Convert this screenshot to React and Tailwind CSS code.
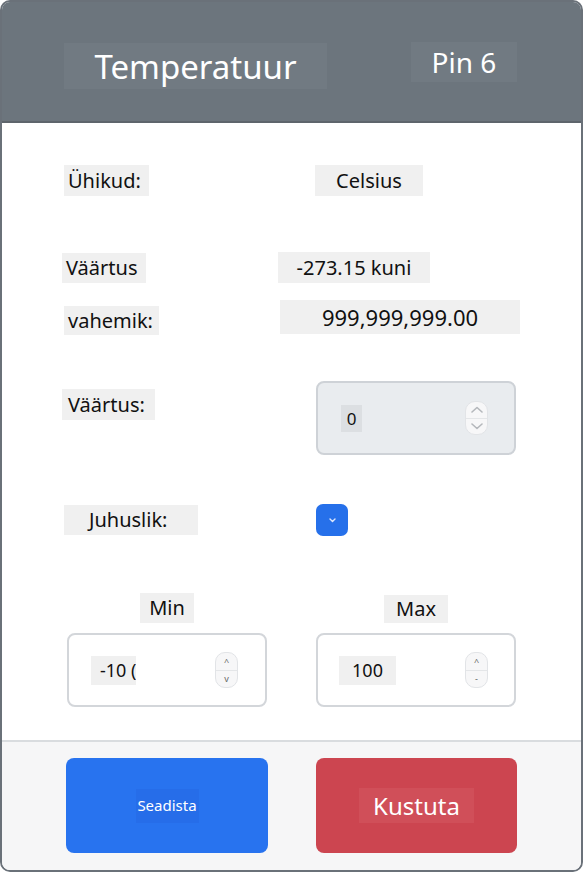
import React from 'react';

const font = { fontFamily: '"Noto Sans", "Open Sans", sans-serif' };

const Chip = ({ className = '', children }) => (
  <div className={`flex items-center bg-[#f0f0f0] text-[#111] whitespace-nowrap ${className}`}>{children}</div>
);

const Spinner = ({ className = '', small = false, minus = false }) => (
  <div className={`flex flex-col rounded-[10px] border border-[#e2e4e7] bg-[#f7f7f8] overflow-hidden ${className}`}>
    <div className="flex-1 flex items-center justify-center border-b border-[#e4e6e8]">
      {small ? (
        <span className="text-[9px] leading-none text-[#666]">^</span>
      ) : (
        <svg width="12" height="7" viewBox="0 0 12 7" fill="none">
          <path d="M1 6 L6 1.5 L11 6" stroke="#b5b8bc" strokeWidth="1.6" strokeLinecap="round" strokeLinejoin="round" />
        </svg>
      )}
    </div>
    <div className="flex-1 flex items-center justify-center">
      {small ? (
        <span className="text-[9px] leading-none text-[#666]">{minus ? '-' : 'v'}</span>
      ) : (
        <svg width="12" height="7" viewBox="0 0 12 7" fill="none">
          <path d="M1 1 L6 5.5 L11 1" stroke="#b5b8bc" strokeWidth="1.6" strokeLinecap="round" strokeLinejoin="round" />
        </svg>
      )}
    </div>
  </div>
);

export default function App() {
  return (
    <div className="w-[583px] h-[872px] bg-white" style={font}>
      <div className="w-[583px] h-[872px] rounded-[10px] border-2 border-[#6a7179] overflow-hidden flex flex-col">
        {/* header */}
        <div className="h-[121px] shrink-0 bg-[#6c757d] border-b-2 border-[#5e656c] flex items-start pt-[41px]">
          <div className="ml-[62px] w-[263px] h-[46px] flex items-center justify-center bg-white/[0.04] text-white text-[33px] leading-none">
            Temperatuur
          </div>
          <div className="ml-[84px] -mt-[1px] w-[106px] h-[40px] flex items-center justify-center bg-white/[0.04] text-white text-[28px] leading-none">
            Pin 6
          </div>
        </div>

        {/* body */}
        <div className="flex-1 flex flex-col text-[20px] leading-none">
          <div className="mt-[42px] h-[31px] flex items-start">
            <Chip className="ml-[62px] w-[85px] h-[31px] pl-[4px]">Ühikud:</Chip>
            <Chip className="ml-[166px] w-[108px] h-[31px] justify-center">Celsius</Chip>
          </div>

          <div className="mt-[56px] h-[31px] flex items-start">
            <Chip className="ml-[60px] mt-[1px] w-[84px] h-[30px] pl-[4px]">Väärtus</Chip>
            <Chip className="ml-[132px] w-[152px] h-[31px] justify-center">-273.15 kuni</Chip>
          </div>

          <div className="mt-[17px] h-[35px] flex items-start">
            <Chip className="ml-[62px] mt-[6px] w-[95px] h-[29px] pl-[4px]">vahemik:</Chip>
            <Chip className="ml-[121px] w-[240px] h-[34px] justify-center text-[22px]">999,999,999.00</Chip>
          </div>

          <div className="mt-[46px] h-[74px] flex items-start">
            <Chip className="ml-[60px] mt-[8px] w-[93px] h-[31px] pl-[6px]">Väärtus:</Chip>
            <div className="ml-[161px] w-[200px] h-[74px] rounded-[8px] border-2 border-[#ced2d7] bg-[#e9ecef] flex items-center pl-[23px] pr-[26px]">
              <div className="w-[21px] h-[27px] bg-[#dcdfe2] flex items-center justify-center text-[17px] text-[#111]">0</div>
              <Spinner className="ml-auto w-[23px] h-[34px]" />
            </div>
          </div>

          <div className="mt-[49px] h-[32px] flex items-start">
            <Chip className="ml-[62px] mt-[1px] w-[134px] h-[30px] pl-[25px]">Juhuslik:</Chip>
            <div className="ml-[118px] w-[32px] h-[32px] rounded-[7px] bg-[#2670ea] flex items-center justify-center">
              <svg width="7" height="5" viewBox="0 0 7 5" fill="none">
                <path d="M1 1 L3.5 3.5 L6 1" stroke="#dfe8fb" strokeWidth="1.4" strokeLinecap="round" strokeLinejoin="round" />
              </svg>
            </div>
          </div>

          <div className="mt-[57px] ml-[65px] grid grid-cols-[200px_200px] gap-x-[49px]">
            <div className="flex justify-center">
              <Chip className="w-[54px] h-[30px] justify-center">Min</Chip>
            </div>
            <div className="flex justify-center">
              <Chip className="mt-[2px] w-[64px] h-[28px] justify-center">Max</Chip>
            </div>
            <div className="mt-[10px] h-[74px] rounded-[8px] border-2 border-[#d3d6da] bg-white flex items-center pl-[22px] pr-[27px]">
              <Chip className="w-[45px] h-[29px] pl-[9px] overflow-hidden text-[18px]">-10 (</Chip>
              <Spinner small className="ml-auto w-[23px] h-[36px]" />
            </div>
            <div className="mt-[10px] h-[74px] rounded-[8px] border-2 border-[#d3d6da] bg-white flex items-center pl-[21px] pr-[26px]">
              <Chip className="w-[57px] h-[29px] justify-center text-[18px]">100</Chip>
              <Spinner small minus className="ml-auto w-[23px] h-[36px]" />
            </div>
          </div>
        </div>

        {/* footer */}
        <div className="h-[130px] shrink-0 bg-[#f6f6f7] border-t-2 border-[#d9dcdf] pt-[16px] pl-[64px] grid grid-cols-[202px_201px] gap-x-[48px] content-start">
          <button className="h-[95px] rounded-[8px] bg-[#2873ef] flex items-center justify-center">
            <span className="w-[63px] h-[34px] flex items-center justify-center bg-[#266de9] text-white text-[15px] leading-none">Seadista</span>
          </button>
          <button className="h-[95px] rounded-[8px] bg-[#cc4550] flex items-center justify-center">
            <span className="w-[115px] h-[35px] flex items-center justify-center bg-[#d04f59] text-white text-[24px] leading-none">Kustuta</span>
          </button>
        </div>
      </div>
    </div>
  );
}
